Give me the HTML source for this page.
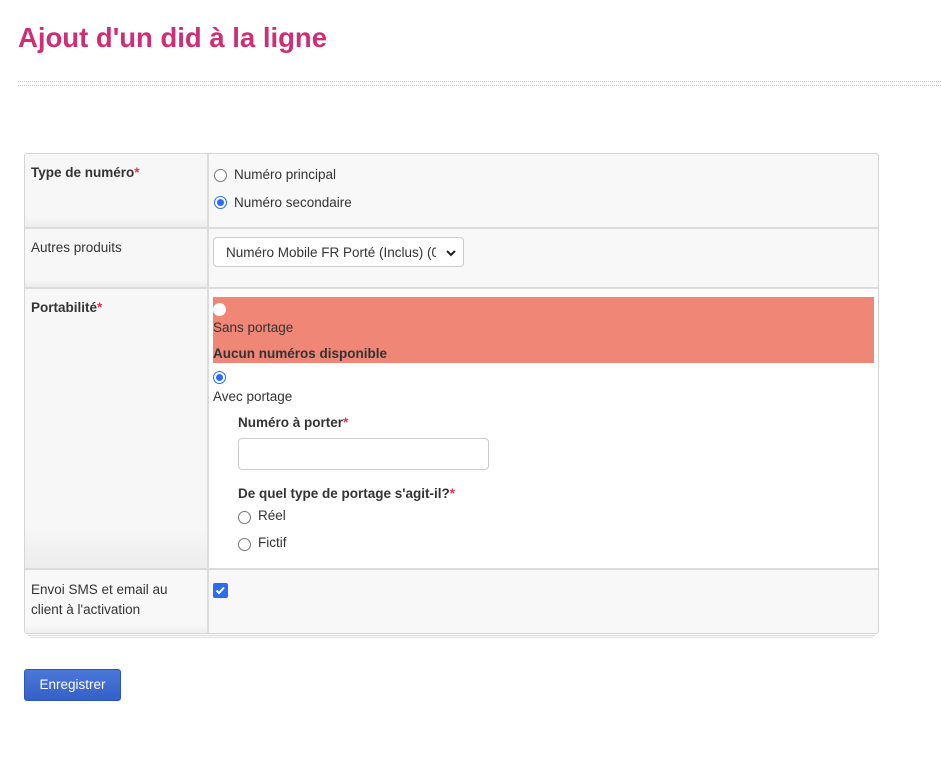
<!DOCTYPE html>
<html><head><meta charset="utf-8"><style>
*{box-sizing:border-box;margin:0;padding:0}
body{width:941px;height:758px;background:#fff;font-family:"Liberation Sans",Arial,sans-serif;font-size:13.5px;color:#333;position:relative;overflow:hidden}
.a{position:absolute;white-space:nowrap}
h1{position:absolute;left:18px;top:22px;font-size:27.5px;font-weight:bold;color:#cf2e74;white-space:nowrap}
.dot{position:absolute;left:18px;width:923px;height:0;border-top:1px dotted #c0c0c0}
.tbl{position:absolute;left:24px;top:153px;width:855px;height:481px;border:1px solid #d4d4d4;border-radius:3px;background:#f8f8f8;overflow:hidden}
.lc{position:absolute;left:0;width:183px;background:linear-gradient(#f7f7f7 85%,#ececec)}
.hl{position:absolute;left:0;width:855px;height:2px;background:#dcdcdc}
.vl{position:absolute;left:182px;top:0;width:2px;height:481px;background:#dcdcdc}
.b{font-weight:bold}
.r{color:#e0344f}
.rad{position:absolute;width:13px;height:13px;border:1px solid #767676;border-radius:50%;background:#fff}
.rad.on{border:1.5px solid #2b6cf0}
.rad.on:after{content:"";position:absolute;left:1.5px;top:1.5px;width:7px;height:7px;border-radius:50%;background:#2b6cf0}
</style></head><body>
<h1>Ajout d'un did à la ligne</h1>
<div class="dot" style="top:81px"></div>
<div class="dot" style="top:85px"></div>

<div class="tbl">
  <div class="lc" style="top:0;height:74px"></div>
  <div class="lc" style="top:74px;height:60px"></div>
  <div class="lc" style="top:134px;height:281px"></div>
  <div class="lc" style="top:415px;height:66px;background:linear-gradient(#f8f8f8 85%,#ececec)"></div>
  <div style="position:absolute;left:184px;top:135px;width:671px;height:280px;background:#fff"></div>
  <div class="hl" style="top:73px"></div>
  <div class="hl" style="top:133px"></div>
  <div class="hl" style="top:414px"></div>
  <div class="vl"></div>
</div>
<div style="position:absolute;left:28px;top:634px;width:847px;height:2px;border-bottom:1px solid #d8d8d8"></div>
<div style="position:absolute;left:30px;top:636px;width:843px;height:2px;border-bottom:1px solid #e0e0e0"></div>

<div class="a b" style="left:31px;top:165px">Type de numéro<span class="r">*</span></div>
<div class="rad" style="left:214px;top:169px"></div>
<div class="a" style="left:234px;top:167px">Numéro principal</div>
<div class="rad on" style="left:214px;top:196px"></div>
<div class="a" style="left:234px;top:195px">Numéro secondaire</div>

<div class="a" style="left:31px;top:240px">Autres produits</div>
<div style="position:absolute;left:213px;top:237px;width:251px;height:30px;border:1px solid #ccc;border-radius:4px;background:#fff"></div>
<div class="a" style="left:226px;top:245px;width:210px;overflow:hidden">Numéro Mobile FR Porté (Inclus) (0</div>
<svg class="a" style="left:445px;top:248px" width="12" height="10" viewBox="0 0 12 10"><path d="M2 3l4 4 4-4" stroke="#222" stroke-width="2" fill="none"/></svg>

<div class="a b" style="left:31px;top:300px">Portabilité<span class="r">*</span></div>
<div style="position:absolute;left:213px;top:297px;width:661px;height:66px;background:#f08676"></div>
<div class="rad" style="left:213px;top:303px;border-color:#fff"></div>
<div class="a" style="left:213px;top:320px">Sans portage</div>
<div class="a b" style="left:213px;top:346px">Aucun numéros disponible</div>
<div class="rad on" style="left:213px;top:371px"></div>
<div class="a" style="left:213px;top:389px">Avec portage</div>
<div class="a b" style="left:238px;top:415px">Numéro à porter<span class="r">*</span></div>
<div style="position:absolute;left:238px;top:438px;width:251px;height:32px;border:1px solid #ccc;border-radius:4px;background:#fff"></div>
<div class="a b" style="left:238px;top:486px">De quel type de portage s'agit-il?<span class="r">*</span></div>
<div class="rad" style="left:238px;top:511px"></div>
<div class="a" style="left:258px;top:508px">Réel</div>
<div class="rad" style="left:238px;top:538px"></div>
<div class="a" style="left:258px;top:535px">Fictif</div>

<div class="a" style="left:31px;top:580px;line-height:20px">Envoi SMS et email au<br>client à l'activation</div>
<div style="position:absolute;left:213px;top:583px;width:15px;height:15px;border-radius:2px;background:#2b6cf0"></div>
<svg class="a" style="left:213px;top:583px" width="15" height="15" viewBox="0 0 15 15"><path d="M3.5 7.5l2.5 2.5 5-5.5" stroke="#fff" stroke-width="2" fill="none"/></svg>

<div style="position:absolute;left:24px;top:669px;width:97px;height:32px;border-radius:3px;background:linear-gradient(#4a78d8,#3560c8);border:1px solid #2e56b8"></div>
<div class="a" style="left:24px;top:677px;width:97px;text-align:center;color:#fff">Enregistrer</div>
</body></html>
